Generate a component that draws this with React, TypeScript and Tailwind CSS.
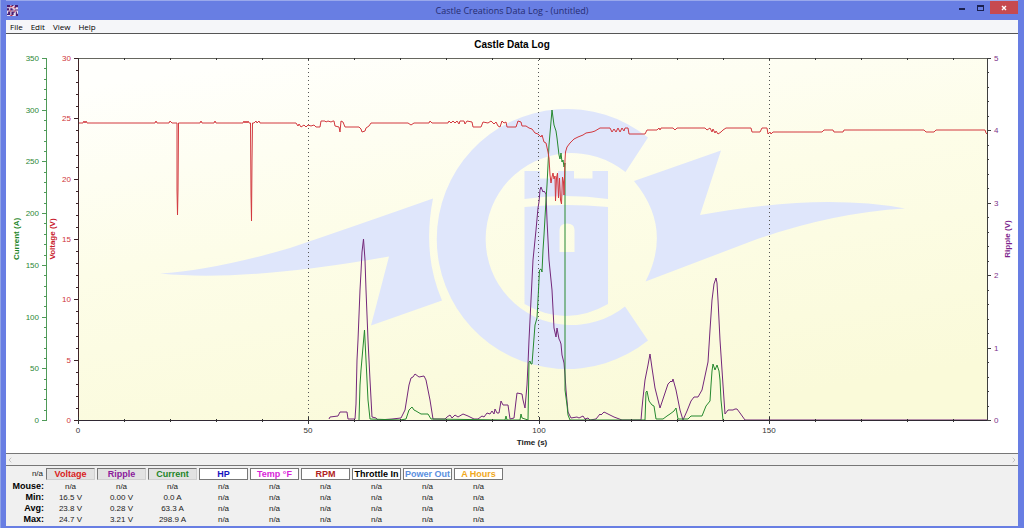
import React from 'react';
import { ChevronLeft, ChevronRight } from 'lucide-react';

interface Channel {
    name: string;
    color: string;
    active?: boolean;
    values: string[];
}

const NA = ['n/a', 'n/a', 'n/a', 'n/a'];

const channels: Channel[] = [
    { name: 'Voltage', color: 'text-[#d92020]', active: true, values: ['n/a', '16.5 V', '23.8 V', '24.7 V'] },
    { name: 'Ripple', color: 'text-[#8b1a9b]', active: true, values: ['n/a', '0.00 V', '0.28 V', '3.21 V'] },
    { name: 'Current', color: 'text-[#1c8526]', active: true, values: ['n/a', '0.0 A', '63.3 A', '298.9 A'] },
    { name: 'HP', color: 'text-[#1616c0]', values: NA },
    { name: 'Temp °F', color: 'text-[#d81fd8]', values: NA },
    { name: 'RPM', color: 'text-[#b02222]', values: NA },
    { name: 'Throttle In', color: 'text-black', values: NA },
    { name: 'Power Out', color: 'text-[#5b8fe0]', values: NA },
    { name: 'A Hours', color: 'text-[#f0a820]', values: NA },
];

const rowLabels = ['Mouse:', 'Min:', 'Avg:', 'Max:'];

// Plot area inside the chart drawing
const LEFT = 78;
const RIGHT = 987;
const TOP = 58;
const BOTTOM = 420;

const range = (count: number) => Array.from({ length: count }, (_, i) => i);

const voltageLine =
    '78,123 83,123 84,121 85,123 86,121 87,123 155,123 156,121 157,123 169,123 170,121 172,123 177,123 177,190 177.5,215 178,190 178.5,123 200,123 201,121 202,123 214,123 215,121 216,123 243,123 244,121 245,123 246,121 247,123 248,121 249,123 250.5,123 251,195 251.5,221 252,160 252.5,123 254,123 256,121 257,123 259,121 260,123 296,123 298,126 299,124 301,127 304,125 306,127 308,125 311,126 314,125 316,127 320,127 321,121 325,121 326,122 328,121 331,122 333,121 334,121 335,126 339,127 340,132 341,121 343,122 345,127 359,127 361,129 362,132 365,131 366,128 369,126 371,123 408,123 411,125 414,123 429,123 430,121 432,123 448,123 449,121 451,123 453,121 455,123 457,121 459,124 460,121 464,121 465,124 467,121 472,122 473,127 481,127 483,122 488,123 491,121 494,124 496,122 498,126 500,127 502,121 504,123 506,122 507,127 516,127 518,121 521,122 522,126 526,126 529,128 532,129 535,133 538,134 541,137 542,135 544,142 546,143 548,152 549,158 550,175 551,183 552,177 553,173 554,179 555,176 555.5,201 556.5,178 557.5,173 558.5,198 559.5,178 560.5,200 561.5,204 562.5,177 563.5,182 564,195 565,160 565.5,152 567,147 570,143 574,139 578,137 583,135 586,133 592,132 595,131 600,128 610,128 612,132 614,129 616,132 618,128 620,132 622,128 624,131 625,128 628,128 629,134 645,134 647,130 657,130 659,128 660,130 661,128 673,128 675,130 677,128 705,128 707,130 710,128 712,132 713,129 715,133 716,131 718,134 721,132 723,130 726,128 751,128 752,132 760,132 762,128 767,128 768,134 770,132 771,134 773,132 822,132 824,130 833,130 834,132 843,132 844,130 924,130 926,132 934,132 936,130 985,130 986,133 987,134';

const rippleLine =
    '329,419 330,417 338,416 340,412 347,412 348,419 355,419 356,404 357,360 358,340 360,290 361,272 362,252 363.5,239 365,260 366,290 368,340 370,380 372,417 376,418 378,420 392,419 401,418 405,410 409,385 411,378 413,377 415,374 419,377 424,376 426,380 430,400 433,419 445,419 447,417 450,415 452,418 455,415 458,417 463,414 468,416 474,419 478,419 482,416 484,417 487,413 490,414 492,411 494,414 495,409 497,413 499,413 501,401 503,405 508,405 510,419 514,418 516,401 517,393 522,394 523,400 525,408 527,385 528,364 529,340 531,300 533,260 536,230 538,208 539,202 540,190 541,187 543,192 544,191 546,194 547,220 549,260 552,290 554,328 556,337 557,328 559,339 560,341 561,344 562,355 564,363 565,375 566,390 568,412 571,418 577,417 579,418 583,416 585,419 588,418 590,420 596,419 600,414 601,415 604,412 610,415 614,417 622,420 641,420 642,408 643,398 645,380 648,365 650,354 652,368 655,388 658,400 660,408 664,396 668,384 671,381 672,382 673,379 676,390 680,410 683,420 687,411 691,401 694,397 698,397 702,390 705,376 708,362 710,330 712,300 714,284 716,278 717,283 718,300 720,340 723,385 725,414 728,410 733,410 735,409 737,409 740,413 745,420 987,420';

const currentLine =
    '359,420 360,385 361,370 363,347 364.5,330 366,360 368,400 370,419 400,420 406,419 409,410 412,407 414,410 416,411 421,414 428,414 431,419 505,420 506,416 507,420 520,420 521,414 522,418 528,420 529,362 530,361 531,364 532,364 535,325 537,318 538.5,290 539.5,270 541,269 542,272 543,250 544,235 546,200 547,185 549,145 552,110 554,125 556,131 557,138 559,155 560,159 561,153 562,162 563,160 564,167 565,163 565,390 567,405 568,415 570,420 645,420 646,392 647,391 649,401 652,405 654,406 656,419 663,419 667,416 670,414 674,411 676,408 678,419 688,419 691,416 702,416 706,406 710,401 711,385 712,371 713,364 715,370 717,365 719,371 720,380 721,400 723,420';

const CastleLogo: React.FC = () => (
    <g fill="#dfe6fb">
        {/* C ring */}
        <path d="M648 137.500 A130 130 0 1 0 648 340.500 L625 306.500 A86 86 0 1 1 625.500 172 Z" />
        {/* bolts */}
        <path d="M160 273.500 Q215 270 290 248 Q355 226 433 198.500 Q422 254 442 300.500 L371 325.500 L389 256.500 Q245 282 160 273.500 Z" />
        <path d="M634 181 L721 150.500 L700 215 Q820 193 905 208.500 Q830 213 752 241 L645.500 281.500 Q673 228 634 181 Z" />
        {/* tower */}
        <path d="M524.500 171 H540 V178.500 H558 V171 H574 V178.500 H592.500 V171 H608 V199 Q566 193 524.500 199 Z" />
        <path
            fillRule="evenodd"
            d="M524.500 207 Q566 203 608 207 V304 Q566 328 524.500 304 Z M559.500 252 V230 Q559.500 223.500 567 223.500 Q574.500 223.500 574.500 230 V252 Z"
        />
    </g>
);

const Axes: React.FC = () => (
    <g fontSize="8" shapeRendering="crispEdges">
        {/* Current */}
        <g stroke="#4f9a58" fill="none">
            <path d="M46.500 58 V420" />
            {range(36).map((i) => {
                const y = Math.round(BOTTOM - (i * 362) / 35) + 0.5;
                return <path key={i} d={`M${i % 5 ? 44 : 42} ${y} H47`} />;
            })}
        </g>
        <g fill="#2c8736" textAnchor="end">
            {range(8).map((i) => (
                <text key={i} x="39" y={Math.round(BOTTOM - (i * 362) / 7) + 3}>{i * 50}</text>
            ))}
        </g>

        {/* Voltage */}
        <g stroke="#3d2327" fill="none">
            {range(31).map((i) => {
                const y = Math.round(BOTTOM - (i * 362) / 30) + 0.5;
                return <path key={i} d={`M${i % 5 ? 76 : 74} ${y} H79`} />;
            })}
        </g>
        <g fill="#cf3338" textAnchor="end">
            {range(7).map((i) => (
                <text key={i} x="71" y={Math.round(BOTTOM - (i * 362) / 6) + 3}>{i * 5}</text>
            ))}
        </g>

        {/* Ripple */}
        <g stroke="#3f3f3f" fill="none">
            {range(26).map((i) => {
                const y = Math.round(BOTTOM - (i * 362) / 25) + 0.5;
                return <path key={i} d={`M987 ${y} H${i % 5 ? 989 : 991}`} />;
            })}
        </g>
        <g fill="#7d3289">
            {range(6).map((i) => (
                <text key={i} x="994" y={Math.round(BOTTOM - (i * 362) / 5) + 3}>{i}</text>
            ))}
        </g>

        {/* Time */}
        <g stroke="#333" fill="none">
            {range(20).map((i) => {
                const x = Math.round(LEFT + i * 46.05) + 0.5;
                return <path key={i} d={`M${x} 58 V60 M${x} ${i % 5 ? 419 : 417} V${i % 5 ? 422 : 424}`} />;
            })}
        </g>
        <g fill="#333" textAnchor="middle">
            {range(4).map((i) => (
                <text key={i} x={Math.round(LEFT + i * 230.3)} y="433">{i * 50}</text>
            ))}
        </g>
    </g>
);

const DataChart: React.FC = () => (
    <svg
        viewBox="6 34 1012 419"
        className="block h-auto w-full bg-white font-['Liberation_Sans',sans-serif]"
        role="img"
        aria-label="Castle Data Log"
    >
        <defs>
            <linearGradient id="plot" x1="0.2" y1="0" x2="0.6" y2="1">
                <stop offset="0" stopColor="#fffffc" />
                <stop offset="0.45" stopColor="#fdfde8" />
                <stop offset="1" stopColor="#fafad9" />
            </linearGradient>
        </defs>
        <text x="512" y="48" fontSize="10" fontWeight="bold" textAnchor="middle">Castle Data Log</text>

        <rect x={LEFT} y={TOP} width={RIGHT - LEFT} height={BOTTOM - TOP} fill="url(#plot)" />
        <CastleLogo />

        <g stroke="#555" strokeDasharray="1 3" shapeRendering="crispEdges">
            <path d="M308.500 60 V420" />
            <path d="M538.500 60 V420" />
            <path d="M769.500 60 V420" />
        </g>

        <g fill="none" strokeWidth="1" strokeLinejoin="round">
            <polyline points={rippleLine} stroke="#74287a" />
            <polyline points={currentLine} stroke="#26892f" />
            <polyline points={voltageLine} stroke="#d2383e" />
        </g>

        <g fill="none" shapeRendering="crispEdges">
            <path d="M78 58.500 H988" stroke="#66665f" />
            <path d="M987.500 58 V420" stroke="#3f3f3f" />
            <path d="M78.500 58 V420" stroke="#3d2327" />
            <path d="M78 420 H988" stroke="#2f2833" />
        </g>
        <Axes />

        <g fontSize="8" fontWeight="bold" textAnchor="middle">
            <text transform="translate(19 239) rotate(-90)" fill="#1c8526">Current (A)</text>
            <text transform="translate(55 239) rotate(-90)" fill="#c8202c">Voltage (V)</text>
            <text transform="translate(1010 239) rotate(-90)" fill="#7d1f8d">Ripple (V)</text>
            <text x="532" y="445" fill="#222">Time (s)</text>
        </g>
    </svg>
);

const TitleBar: React.FC = () => (
    <header className="grid h-5 grid-cols-[1fr_auto_1fr] items-center border-t border-[#9aa9ec] text-[9px] text-[#262c70]">
        <svg viewBox="0 0 10 10" className="ml-px h-[11px] w-[11px]" aria-hidden="true">
            <rect width="10" height="10" fill="#e9dff0" />
            <path
                fill="#4a1c72"
                d="M0 0h3v2h-3z M4 0h2v1h-2z M7 0h3v2h-2v1h-1z M0 3h2v2h-2z M3 3h2v1h1v1h-3z M7 4h3v1h-3z M1 6h2v3h-3v-1h1z M4 6h3v1h-1v2h-2z M8 6h1v2h1v2h-2z"
            />
            <path fill="#b9304c" d="M3 1h2v1h-2z M6 2h2v1h-2z M2 5h2v1h-2z M6 5h2v1h-2z M3 9h2v1h-2z" />
        </svg>
        <h1>Castle Creations Data Log - (untitled)</h1>
        <div className="flex h-full items-start justify-end">
            <button type="button" aria-label="Minimize" className="flex h-[13px] w-4 items-end justify-center pb-1">
                <span className="h-[2px] w-[6px] bg-[#1b2150]" />
            </button>
            <button type="button" aria-label="Maximize" className="flex h-[13px] w-5 items-center justify-center">
                <span className="h-[6px] w-[7px] border border-t-2 border-[#1b2150]" />
            </button>
            <button type="button" aria-label="Close" className="flex h-[13px] w-7 items-center justify-center bg-[#c64a50]">
                <svg viewBox="0 0 6 6" className="h-[6px] w-[6px]" stroke="#fff" strokeWidth="1.400">
                    <path d="M1 1 L5 5 M5 1 L1 5" />
                </svg>
            </button>
        </div>
    </header>
);

const StatsTable: React.FC = () => (
    <table className="table-fixed border-separate border-spacing-0 pb-px font-['Liberation_Sans',sans-serif] text-[8px] leading-[11px] text-[#222]">
        <colgroup>
            <col className="w-[39px]" />
            {channels.map((c) => (
                <col key={c.name} className="w-[51px]" />
            ))}
        </colgroup>
        <thead>
            <tr>
                <th scope="col" className="p-0 pr-[2px] text-right font-normal">n/a</th>
                {channels.map((c) => (
                    <th key={c.name} scope="col" className="p-0 pt-[2px] pr-px pb-px pl-px">
                        <button
                            type="button"
                            aria-pressed={!!c.active}
                            className={`block h-3 w-full border text-center text-[9px] leading-[11px] font-bold whitespace-nowrap ${c.color} ${
                                c.active
                                    ? 'border-t-[#777] border-r-[#d0d0d0] border-b-[#d0d0d0] border-l-[#777] bg-[#e2e2e2]'
                                    : 'border-[#777] bg-white'
                            }`}
                        >
                            {c.name}
                        </button>
                    </th>
                ))}
            </tr>
        </thead>
        <tbody>
            {rowLabels.map((label, row) => (
                <tr key={label}>
                    <th scope="row" className="p-0 pr-px text-right text-[9px] font-bold text-black">{label}</th>
                    {channels.map((c) => (
                        <td key={c.name} className="p-0 text-center">{c.values[row]}</td>
                    ))}
                </tr>
            ))}
        </tbody>
    </table>
);

const App: React.FC = () => {
    return (
        <div className="min-h-screen border-l border-[#8fa3e6] bg-[#687ee3] pr-[6px] pb-[2px] pl-[5px] font-['Open_Sans',sans-serif]">
            <TitleBar />
            <main className="bg-[#f0f0f0]">
                <nav className="flex h-[14px] items-center gap-2 border-b border-[#555] bg-[#f5f6f9] px-1 text-[8px] text-black">
                    <button type="button">File</button>
                    <button type="button">Edit</button>
                    <button type="button">View</button>
                    <button type="button">Help</button>
                </nav>
                <DataChart />
                <div className="flex h-[13px] items-center justify-between border-t border-b border-[#777] text-[#aaa]">
                    <button type="button" aria-label="Scroll left">
                        <ChevronLeft className="h-2 w-2" />
                    </button>
                    <button type="button" aria-label="Scroll right">
                        <ChevronRight className="h-2 w-2" />
                    </button>
                </div>
                <StatsTable />
            </main>
        </div>
    );
};

export default App;
